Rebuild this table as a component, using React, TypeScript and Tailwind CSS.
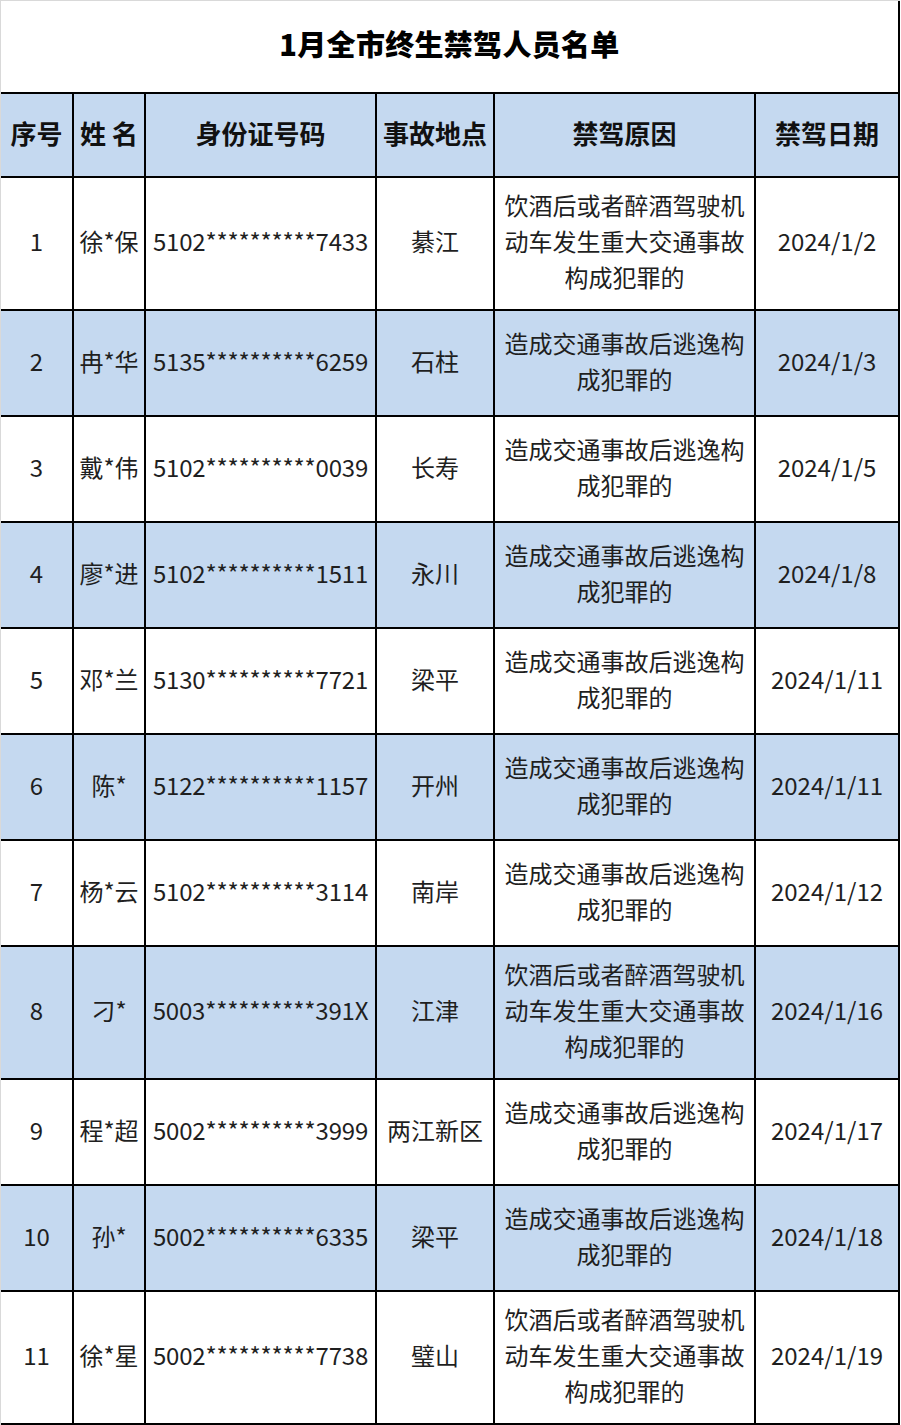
import React from "react";

type Row = {
  no: number;
  name: string;
  id: string;
  place: string;
  reason: "drunk" | "escape";
  date: string;
};

const rows: Row[] = [
  { no: 1, name: "徐*保", id: "5102**********7433", place: "綦江", reason: "drunk", date: "2024/1/2" },
  { no: 2, name: "冉*华", id: "5135**********6259", place: "石柱", reason: "escape", date: "2024/1/3" },
  { no: 3, name: "戴*伟", id: "5102**********0039", place: "长寿", reason: "escape", date: "2024/1/5" },
  { no: 4, name: "廖*进", id: "5102**********1511", place: "永川", reason: "escape", date: "2024/1/8" },
  { no: 5, name: "邓*兰", id: "5130**********7721", place: "梁平", reason: "escape", date: "2024/1/11" },
  { no: 6, name: "陈*", id: "5122**********1157", place: "开州", reason: "escape", date: "2024/1/11" },
  { no: 7, name: "杨*云", id: "5102**********3114", place: "南岸", reason: "escape", date: "2024/1/12" },
  { no: 8, name: "刁*", id: "5003**********391X", place: "江津", reason: "drunk", date: "2024/1/16" },
  { no: 9, name: "程*超", id: "5002**********3999", place: "两江新区", reason: "escape", date: "2024/1/17" },
  { no: 10, name: "孙*", id: "5002**********6335", place: "梁平", reason: "escape", date: "2024/1/18" },
  { no: 11, name: "徐*星", id: "5002**********7738", place: "璧山", reason: "drunk", date: "2024/1/19" },
];

const reasons = {
  drunk: ["饮酒后或者醉酒驾驶机", "动车发生重大交通事故", "构成犯罪的"],
  escape: ["造成交通事故后逃逸构", "成犯罪的"],
};

const font = { fontFamily: '"Noto Sans CJK SC", "Noto Sans", sans-serif' };

const cell = "flex items-center justify-center text-center border-r-2 border-b-2 border-black pb-[5px]";

export default function App() {
  return (
    <div className="w-[901px] h-[1425px] bg-white overflow-hidden" style={font}>
      <div className="w-[900px] border-l border-t border-[#d9d9d9]">
        {/* Title */}
        <div className="h-[91px] flex items-center justify-center border-r-2 border-black">
          <h1 className="text-[29px] font-black text-black tracking-[0.3px] leading-none pb-[6px]">
            1月全市终生禁驾人员名单
          </h1>
        </div>

        {/* Header */}
        <div className="flex h-[86px] border-t-2 border-black bg-[#c5d9f0] text-[26px] font-bold text-[#111]">
          <div className={`${cell} w-[73px]`}>序号</div>
          <div className={`${cell} w-[72px]`}>姓 名</div>
          <div className={`${cell} w-[231px]`}>身份证号码</div>
          <div className={`${cell} w-[118px]`}>事故地点</div>
          <div className={`${cell} w-[261px]`}>禁驾原因</div>
          <div className={`${cell} w-[144px]`}>禁驾日期</div>
        </div>

        {/* Rows */}
        {rows.map((r) => {
          const lines = reasons[r.reason];
          const h = lines.length === 3 ? "h-[133px]" : "h-[106px]";
          const bg = r.no % 2 === 0 ? "bg-[#c5d9f0]" : "bg-white";
          return (
            <div key={r.no} className={`flex ${h} ${bg} text-[24px] text-[#1f1f1f] leading-[36px]`}>
              <div className={`${cell} w-[73px]`}>{r.no}</div>
              <div className={`${cell} w-[72px] whitespace-nowrap`}>{r.name}</div>
              <div className={`${cell} w-[231px] whitespace-nowrap tracking-[-0.2px]`}>{r.id}</div>
              <div className={`${cell} w-[118px] whitespace-nowrap`}>{r.place}</div>
              <div className={`${cell} w-[261px] flex-col`}>
                {lines.map((l) => (
                  <div key={l} className="whitespace-nowrap">{l}</div>
                ))}
              </div>
              <div className={`${cell} w-[144px]`}>{r.date}</div>
            </div>
          );
        })}
      </div>
    </div>
  );
}
